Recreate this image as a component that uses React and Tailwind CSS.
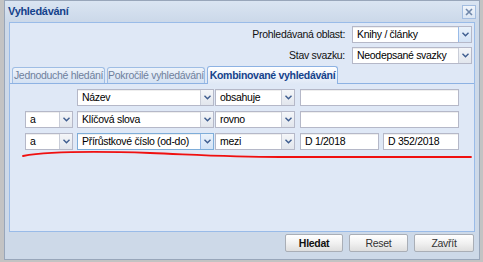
import React from "react";

const Chevron = () => (
  <svg width="7" height="5" viewBox="0 0 7 5" className="block">
    <path d="M0.5 0.8 L3.5 3.8 L6.5 0.8" fill="none" stroke="#3d5c8f" strokeWidth="1.4" />
  </svg>
);

function Combo({ value, width, focused = false, hover = false }) {
  return (
    <div
      className={
        "h-[17px] flex bg-white border " +
        (focused ? "border-[#7eadd9]" : "border-[#b5b8c8]")
      }
      style={{ width }}
    >
      <div className="flex-1 min-w-0 flex items-center pl-[4px] text-black whitespace-nowrap overflow-hidden shadow-[inset_0_1px_0_#eeeeee]">
        {value}
      </div>
      <div
        className={
          "w-[13px] flex items-center justify-center border-l " +
          (focused || hover
            ? "border-[#99bbe8] bg-gradient-to-b from-[#eaf2fb] to-[#d3e3f6]"
            : "border-[#c9cdd8] bg-gradient-to-b from-[#f4f6f9] to-[#e2e6ed]")
        }
      >
        <Chevron />
      </div>
    </div>
  );
}

function Field({ value = "", width }) {
  return (
    <div
      className="h-[17px] flex items-center pl-[4px] bg-white border border-[#b5b8c8] shadow-[inset_0_1px_0_#eeeeee] text-black whitespace-nowrap"
      style={{ width }}
    >
      {value}
    </div>
  );
}

function Btn({ children, bold = false, width }) {
  return (
    <div
      className={
        "h-[18px] flex items-center justify-center rounded-[2px] border border-[#a9aeb6] bg-gradient-to-b from-white via-[#f1f1f1] to-[#dedede] " +
        (bold ? "font-bold text-[#111]" : "text-[#333]")
      }
      style={{ width }}
    >
      {children}
    </div>
  );
}

export default function App() {
  return (
    <div className="relative w-[483px] h-[262px] bg-[#c3c3c3] pl-[4px] font-['Liberation_Sans',Arial,sans-serif] text-[10.5px] tracking-[-0.3px] leading-none">
      <div className="w-[476px] h-[260px] border border-[#98a6ba] bg-[#cdd9e8] flex flex-col">
        {/* title bar */}
        <div className="h-[21px] flex items-center justify-between pl-[3px] pr-[3px] bg-gradient-to-b from-[#dae5f2] to-[#cbd8e9]">
          <span className="font-bold text-[#15428b] text-[11px]">Vyhledávání</span>
          <div className="w-[14px] h-[14px] border border-[#a3bde0] bg-gradient-to-b from-[#f0f5fb] to-[#dbe6f4] flex items-center justify-center">
            <svg width="8" height="8" viewBox="0 0 8 8">
              <path d="M1 1 L7 7 M7 1 L1 7" stroke="#6f87aa" strokeWidth="1.6" />
            </svg>
          </div>
        </div>

        {/* inner panel */}
        <div className="mx-[4px] h-[210px] border border-[#99bbe8] bg-[#dfe8f6] flex flex-col">
          <div className="pt-[3px] pr-[2px] flex flex-col items-end gap-[4px]">
            <div className="flex items-center gap-[7px]">
              <span className="text-[#111]">Prohledávaná oblast:</span>
              <Combo value="Knihy / články" width={120} hover />
            </div>
            <div className="flex items-center gap-[7px]">
              <span className="text-[#111]">Stav svazku:</span>
              <Combo value="Neodepsané svazky" width={120} />
            </div>
          </div>

          {/* tab strip */}
          <div className="h-[20px] pl-[2px] flex items-end gap-[2px] border-b border-[#8db2e3]">
            <div className="w-[93px] h-[16px] rounded-t-[3px] border border-b-0 border-[#9fbde4] bg-gradient-to-b from-[#eef3fa] to-[#d3e1f3] flex items-center justify-center text-[#6f809c] whitespace-nowrap">
              Jednoduché hledání
            </div>
            <div className="w-[98px] h-[16px] rounded-t-[3px] border border-b-0 border-[#9fbde4] bg-gradient-to-b from-[#eef3fa] to-[#d3e1f3] flex items-center justify-center text-[#6f809c] whitespace-nowrap">
              Pokročilé vyhledávání
            </div>
            <div className="w-[131px] h-[18px] -mb-[1px] rounded-t-[3px] border border-b-0 border-[#8db2e3] bg-gradient-to-b from-white to-[#dfe8f6] flex items-center justify-center font-bold text-[#15428b] whitespace-nowrap">
              Kombinované vyhledávání
            </div>
          </div>

          {/* tab body */}
          <div className="pt-[5px] pl-[15px] flex flex-col gap-[5px]">
            <div className="flex items-center">
              <div className="w-[48px]" />
              <div className="ml-[4px]"><Combo value="Název" width={137} /></div>
              <div className="ml-[1px]"><Combo value="obsahuje" width={80} /></div>
              <div className="ml-[5px]"><Field width={159} /></div>
            </div>
            <div className="flex items-center">
              <Combo value="a" width={48} />
              <div className="ml-[4px]"><Combo value="Klíčová slova" width={137} /></div>
              <div className="ml-[1px]"><Combo value="rovno" width={80} /></div>
              <div className="ml-[5px]"><Field width={159} /></div>
            </div>
            <div className="flex items-center">
              <Combo value="a" width={48} />
              <div className="ml-[4px]"><Combo value="Přírůstkové číslo (od-do)" width={137} focused /></div>
              <div className="ml-[1px]"><Combo value="mezi" width={80} /></div>
              <div className="ml-[5px]"><Field value="D 1/2018" width={79} /></div>
              <div className="ml-[4px]"><Field value="D 352/2018" width={76} /></div>
            </div>
          </div>
        </div>

        {/* footer */}
        <div className="flex-1 flex justify-end items-start pt-[2px] pr-[5px] gap-[6px]">
          <Btn bold width={58}>Hledat</Btn>
          <Btn width={59}>Reset</Btn>
          <Btn width={60}>Zavřít</Btn>
        </div>
      </div>

      {/* hand-drawn red annotation */}
      <svg className="absolute left-0 top-0 pointer-events-none" width="483" height="262">
        <path
          d="M23 156 C 45 152, 90 151, 150 153 C 200 155, 230 157, 280 157 L 471 157"
          fill="none"
          stroke="#f01010"
          strokeWidth="1.8"
          strokeLinecap="round"
        />
      </svg>
    </div>
  );
}
